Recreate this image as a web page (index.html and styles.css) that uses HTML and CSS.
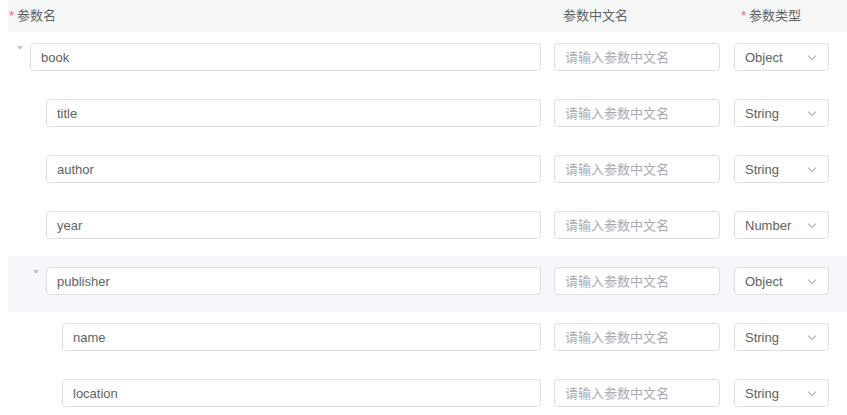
FILE: index.html
```html
<!DOCTYPE html>
<html lang="zh-CN">
<head>
  <meta charset="UTF-8">
  <meta name="viewport" content="width=device-width, initial-scale=1.0">
  <title>参数配置</title>
  <link rel="stylesheet" href="styles.css">
</head>
<body>
  <div class="table">
    <!-- Header -->
    <div class="row head">
      <div class="cell name-cell"><span class="req">*</span>参数名</div>
      <div class="cell cn-cell">参数中文名</div>
      <div class="cell type-cell"><span class="req">*</span>参数类型</div>
    </div>

    <div class="row">
      <div class="cell name-cell">
        <span class="indent lv0"></span><span class="expand open"></span>
        <input class="field" type="text" value="book">
      </div>
      <div class="cell cn-cell"><input class="field" type="text" placeholder="请输入参数中文名"></div>
      <div class="cell type-cell"><div class="select">Object<span class="arrow"></span></div></div>
    </div>

    <div class="row">
      <div class="cell name-cell">
        <span class="indent lv1"></span><span class="expand"></span>
        <input class="field" type="text" value="title">
      </div>
      <div class="cell cn-cell"><input class="field" type="text" placeholder="请输入参数中文名"></div>
      <div class="cell type-cell"><div class="select">String<span class="arrow"></span></div></div>
    </div>

    <div class="row">
      <div class="cell name-cell">
        <span class="indent lv1"></span><span class="expand"></span>
        <input class="field" type="text" value="author">
      </div>
      <div class="cell cn-cell"><input class="field" type="text" placeholder="请输入参数中文名"></div>
      <div class="cell type-cell"><div class="select">String<span class="arrow"></span></div></div>
    </div>

    <div class="row">
      <div class="cell name-cell">
        <span class="indent lv1"></span><span class="expand"></span>
        <input class="field" type="text" value="year">
      </div>
      <div class="cell cn-cell"><input class="field" type="text" placeholder="请输入参数中文名"></div>
      <div class="cell type-cell"><div class="select">Number<span class="arrow"></span></div></div>
    </div>

    <div class="row hover">
      <div class="cell name-cell">
        <span class="indent lv1"></span><span class="expand open"></span>
        <input class="field" type="text" value="publisher">
      </div>
      <div class="cell cn-cell"><input class="field" type="text" placeholder="请输入参数中文名"></div>
      <div class="cell type-cell"><div class="select">Object<span class="arrow"></span></div></div>
    </div>

    <div class="row">
      <div class="cell name-cell">
        <span class="indent lv2"></span><span class="expand"></span>
        <input class="field" type="text" value="name">
      </div>
      <div class="cell cn-cell"><input class="field" type="text" placeholder="请输入参数中文名"></div>
      <div class="cell type-cell"><div class="select">String<span class="arrow"></span></div></div>
    </div>

    <div class="row">
      <div class="cell name-cell">
        <span class="indent lv2"></span><span class="expand"></span>
        <input class="field" type="text" value="location">
      </div>
      <div class="cell cn-cell"><input class="field" type="text" placeholder="请输入参数中文名"></div>
      <div class="cell type-cell"><div class="select">String<span class="arrow"></span></div></div>
    </div>
  </div>
</body>
</html>
```

FILE: styles.css
```css
body {
  margin: 0;
  font-family: "Liberation Sans", "Noto Sans CJK SC", sans-serif;
  font-size: 13px;
  color: #606266;
  background-color: #fff;
  overflow: hidden;
}

.table {
  margin-left: 8px;
  width: 839px;
}

.row {
  display: grid;
  grid-template-columns: 539px 180px 1fr;
  padding: 11px 0 17px;
}

.row.head {
  height: 32px;
  padding: 0;
  align-items: center;
  background-color: #f5f7f6;
}

.row.hover {
  background-color: #f5f7fa;
}

.cell {
  display: flex;
  align-items: flex-start;
  padding: 0 7px;
}

.head .cell {
  align-items: center;
  line-height: 32px;
}

.head .name-cell {
  padding-left: 1px;
}

.head .cn-cell {
  padding-left: 16px;
}

.head .type-cell {
  padding-left: 14px;
}

.req {
  color: #f56c6c;
  margin-right: 3px;
}

.name-cell {
  padding-left: 7px;
  padding-right: 6px;
}

.indent {
  display: inline-block;
  flex: none;
}

.indent.lv1 { width: 16px; }
.indent.lv2 { width: 32px; }

.expand {
  flex: none;
  width: 15px;
  height: 12px;
  margin-top: 2px;
  position: relative;
}

.expand.open::before {
  content: "";
  position: absolute;
  left: 2px;
  top: 1px;
  border-left: 3px solid transparent;
  border-right: 3px solid transparent;
  border-top: 4px solid #c0c4cc;
}

.field {
  box-sizing: border-box;
  flex: 1;
  min-width: 0;
  width: 100%;
  height: 28px;
  padding: 0 10px;
  border: 1px solid #dcdfe6;
  border-radius: 4px;
  font-family: inherit;
  font-size: 13px;
  color: #606266;
  background-color: #fff;
  outline: none;
}

.field::placeholder {
  color: #a8abb2;
}

.select {
  box-sizing: border-box;
  width: 95px;
  height: 28px;
  padding: 0 11px 0 10px;
  border: 1px solid #dcdfe6;
  border-radius: 4px;
  background-color: #fff;
  display: flex;
  align-items: center;
  justify-content: space-between;
  color: #606266;
}

.arrow {
  width: 5px;
  height: 5px;
  border-right: 1px solid #a8abb2;
  border-bottom: 1px solid #a8abb2;
  transform: rotate(45deg);
  margin: -3px 2px 0 0;
}
```
